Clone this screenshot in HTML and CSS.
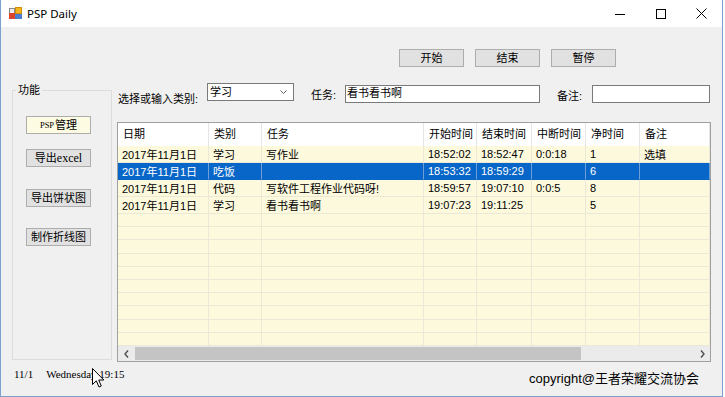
FILE: index.html
```html
<!DOCTYPE html>
<html lang="zh-CN">
<head>
<meta charset="utf-8">
<title>PSP Daily</title>
<link rel="stylesheet" href="styles.css">
</head>
<body>
<div class="window">
  <div class="titlebar">
    <svg class="app-icon" width="13" height="13" viewBox="0 0 13 13">
      <rect x="0.5" y="1.5" width="5" height="5" fill="#ececec" stroke="#8a8a8a"/>
      <rect x="6" y="0" width="7" height="7" fill="#f2b31c"/>
      <rect x="6.5" y="0.5" width="6" height="6" fill="none" stroke="#d08a0c"/>
      <rect x="0" y="6" width="6" height="6" fill="#d8452c"/>
      <rect x="6" y="7" width="7" height="5" fill="#4a7fd0"/>
    </svg>
    <span class="title">PSP Daily</span>
    <div class="caption">
      <span class="cap-btn"><svg width="10" height="10" viewBox="0 0 10 10"><path d="M0 5.5H10" stroke="#000" stroke-width="1"/></svg></span>
      <span class="cap-btn"><svg width="10" height="10" viewBox="0 0 10 10"><rect x="0.5" y="0.5" width="9" height="9" fill="none" stroke="#000"/></svg></span>
      <span class="cap-btn"><svg width="11" height="11" viewBox="0 0 11 11"><path d="M0.5 0.5L10.5 10.5M10.5 0.5L0.5 10.5" stroke="#000" stroke-width="1"/></svg></span>
    </div>
  </div>

  <div class="client">
    <div class="toolbar">
      <button class="btn">开始</button>
      <button class="btn">结束</button>
      <button class="btn">暂停</button>
    </div>

    <div class="main">
      <fieldset class="group">
        <legend class="legend">功能</legend>
        <button class="btn gbtn g1 active"><span class="en psp">PSP</span>管理</button>
        <button class="btn gbtn g2">导出<span class="en excel">excel</span></button>
        <button class="btn gbtn g3">导出饼状图</button>
        <button class="btn gbtn g4">制作折线图</button>
      </fieldset>

      <div class="content">
        <div class="form-row">
          <label class="lbl lbl-cat">选择或输入类别:</label>
          <div class="combo"><span class="combo-text">学习</span>
            <svg class="chev" width="7" height="4" viewBox="0 0 7 4"><path d="M0.5 0.5L3.5 3.5L6.5 0.5" fill="none" stroke="#606060"/></svg>
          </div>
          <label class="lbl lbl-task">任务:</label>
          <div class="textbox tb-task">看书看书啊</div>
          <label class="lbl lbl-note">备注:</label>
          <div class="textbox tb-note"></div>
        </div>

        <div class="datagrid">
          <div class="grow header">
            <div class="hc">日期</div><div class="hc">类别</div><div class="hc">任务</div><div class="hc">开始时间</div><div class="hc">结束时间</div><div class="hc">中断时间</div><div class="hc">净时间</div><div class="hc">备注</div>
          </div>
          <div class="rows">
            <div class="grow"><div class="c">2017年11月1日</div><div class="c">学习</div><div class="c">写作业</div><div class="c">18:52:02</div><div class="c">18:52:47</div><div class="c">0:0:18</div><div class="c">1</div><div class="c">选填</div></div>
            <div class="grow sel"><div class="c">2017年11月1日</div><div class="c">吃饭</div><div class="c"></div><div class="c">18:53:32</div><div class="c">18:59:29</div><div class="c"></div><div class="c">6</div><div class="c"></div></div>
            <div class="grow"><div class="c">2017年11月1日</div><div class="c">代码</div><div class="c">写软件工程作业代码呀!</div><div class="c">18:59:57</div><div class="c">19:07:10</div><div class="c">0:0:5</div><div class="c">8</div><div class="c"></div></div>
            <div class="grow"><div class="c">2017年11月1日</div><div class="c">学习</div><div class="c">看书看书啊</div><div class="c">19:07:23</div><div class="c">19:11:25</div><div class="c"></div><div class="c">5</div><div class="c"></div></div>
            <div class="grow"><div class="c"></div><div class="c"></div><div class="c"></div><div class="c"></div><div class="c"></div><div class="c"></div><div class="c"></div><div class="c"></div></div>
            <div class="grow"><div class="c"></div><div class="c"></div><div class="c"></div><div class="c"></div><div class="c"></div><div class="c"></div><div class="c"></div><div class="c"></div></div>
            <div class="grow"><div class="c"></div><div class="c"></div><div class="c"></div><div class="c"></div><div class="c"></div><div class="c"></div><div class="c"></div><div class="c"></div></div>
            <div class="grow"><div class="c"></div><div class="c"></div><div class="c"></div><div class="c"></div><div class="c"></div><div class="c"></div><div class="c"></div><div class="c"></div></div>
            <div class="grow"><div class="c"></div><div class="c"></div><div class="c"></div><div class="c"></div><div class="c"></div><div class="c"></div><div class="c"></div><div class="c"></div></div>
            <div class="grow"><div class="c"></div><div class="c"></div><div class="c"></div><div class="c"></div><div class="c"></div><div class="c"></div><div class="c"></div><div class="c"></div></div>
            <div class="grow"><div class="c"></div><div class="c"></div><div class="c"></div><div class="c"></div><div class="c"></div><div class="c"></div><div class="c"></div><div class="c"></div></div>
            <div class="grow"><div class="c"></div><div class="c"></div><div class="c"></div><div class="c"></div><div class="c"></div><div class="c"></div><div class="c"></div><div class="c"></div></div>
            <div class="grow"><div class="c"></div><div class="c"></div><div class="c"></div><div class="c"></div><div class="c"></div><div class="c"></div><div class="c"></div><div class="c"></div></div>
            <div class="grow"><div class="c"></div><div class="c"></div><div class="c"></div><div class="c"></div><div class="c"></div><div class="c"></div><div class="c"></div><div class="c"></div></div>
          </div>
          <div class="hscroll">
            <span class="sb-arrow"><svg width="5" height="8" viewBox="0 0 5 8"><path d="M4 0.5L1 4L4 7.5" fill="none" stroke="#505050" stroke-width="1.4"/></svg></span>
            <span class="sb-track"><span class="sb-thumb"></span></span>
            <span class="sb-arrow"><svg width="5" height="8" viewBox="0 0 5 8"><path d="M1 0.5L4 4L1 7.5" fill="none" stroke="#505050" stroke-width="1.4"/></svg></span>
          </div>
        </div>
      </div>
    </div>

    <div class="status">
      <span class="clock"><span class="date">11/1</span>Wednesday 19:15</span>
      <span class="copyright">copyright@王者荣耀交流协会</span>
    </div>
  </div>

  <svg class="cursor" width="13" height="21" viewBox="0 0 13 21">
    <path d="M0.5 0.5V16.5L4.3 12.8L7 19L9.3 18L6.7 12H11.8Z" fill="#fff" stroke="#000" stroke-width="1" stroke-linejoin="round"/>
  </svg>
</div>
</body>
</html>
```

FILE: styles.css
```css
* { box-sizing: border-box; }

html, body {
  margin: 0;
  padding: 0;
}

body {
  width: 725px;
  height: 397px;
  overflow: hidden;
  background: #ffffff;
  font-family: "Liberation Sans", "Noto Sans CJK SC", sans-serif;
  font-size: 11px;
  color: #000;
}

.window {
  position: relative;
  width: 723px;
  height: 397px;
  background: #f0f0f0;
  border: 1px solid #7c9fcc;
  border-top: none;
  display: flex;
  flex-direction: column;
}

/* title bar */
.titlebar {
  height: 27px;
  flex: none;
  background: #ffffff;
  display: flex;
  align-items: center;
}

.app-icon {
  margin-left: 8px;
  flex: none;
}

.title {
  margin-left: 5px;
  font-family: "Noto Sans", "Liberation Sans", sans-serif;
  font-size: 11.5px;
  color: #000;
}

.caption {
  margin-left: auto;
  display: flex;
  height: 27px;
}

.cap-btn {
  width: 41px;
  height: 27px;
  display: flex;
  align-items: center;
  justify-content: center;
}

/* client area */
.client {
  flex: 1;
  display: flex;
  flex-direction: column;
}

.toolbar {
  display: flex;
  gap: 11px;
  padding: 22px 0 0 398px;
}

.btn {
  width: 65px;
  height: 18px;
  margin: 0;
  padding: 0;
  background: #e1e1e1;
  border: 1px solid #adadad;
  font-family: "Liberation Sans", "Noto Sans CJK SC", sans-serif;
  font-size: 11px;
  line-height: 14px;
  color: #000;
  display: flex;
  align-items: center;
  justify-content: center;
}

.main {
  display: flex;
  margin-top: 17px;
}

/* group box */
.group {
  margin: 0 0 0 11px;
  width: 100px;
  height: 276px;
  border: 1px solid #dcdcdc;
  padding: 0 0 0 3px;
  display: flex;
  flex-direction: column;
  min-inline-size: 0;
}

.legend {
  padding: 0 2px;
  font-size: 11px;
  line-height: 12px;
  color: #000;
}

.gbtn {
  margin-left: 10px;
  font-family: "Liberation Serif", "Noto Sans CJK SC", serif;
}

.gbtn.g1 { margin-top: 20px; }
.gbtn.g2 { margin-top: 15px; }
.gbtn.g3 { margin-top: 22px; }
.gbtn.g4 { margin-top: 21px; }

.gbtn.active {
  background: #fdfbe2;
}

.en { font-family: "Liberation Serif", serif; }
.en.psp { font-size: 8.5px; margin-right: 1px; }
.en.excel { font-size: 12px; }

/* right content */
.content {
  margin-left: 5px;
  width: 594px;
  display: flex;
  flex-direction: column;
}

.form-row {
  display: flex;
  height: 18px;
  align-items: flex-start;
}

.lbl {
  font-size: 11px;
  line-height: 12px;
  white-space: nowrap;
  flex: none;
}

.lbl-cat {
  width: 90px;
  padding-left: 1px;
  padding-top: 9px;
}

.lbl-task {
  width: 34px;
  margin-left: 17px;
  padding-top: 5px;
}

.lbl-note {
  width: 35px;
  margin-left: 17px;
  padding-top: 6px;
}

.combo {
  width: 87px;
  height: 18px;
  margin-top: -1px;
  background: #fff;
  border: 1px solid #7a7a7a;
  display: flex;
  align-items: center;
  padding: 0 6px 0 2px;
  flex: none;
}

.combo-text {
  line-height: 14px;
  margin-top: -1px;
}

.chev {
  margin-left: auto;
}

.textbox {
  height: 18px;
  margin-top: 1px;
  background: #fff;
  border: 1px solid #7a7a7a;
  padding-left: 1px;
  line-height: 14px;
  flex: none;
}

.tb-task { width: 195px; }
.tb-note { width: 118px; }

/* data grid */
.datagrid {
  margin-top: 20px;
  width: 594px;
  height: 240px;
  border: 1px solid #a0a0a0;
  background: #fcf9dd;
  display: flex;
  flex-direction: column;
}

.grow {
  display: grid;
  grid-template-columns: 91px 53px 162px 53px 55px 54px 54px 70px;
}

.header {
  height: 23px;
  background: #ffffff;
  flex: none;
}

.hc {
  border-right: 1px solid #e5e5e5;
  padding-left: 5px;
  line-height: 23px;
  white-space: nowrap;
  font-size: 11px;
}

.rows {
  height: 200px;
  flex: none;
  display: flex;
  flex-direction: column;
}

.rows .grow {
  flex: 1;
}

.c {
  border-right: 1px solid #ebe8d6;
  border-bottom: 1px solid #ebe8d6;
  padding-left: 4px;
  white-space: nowrap;
  overflow: hidden;
  display: flex;
  align-items: center;
  font-size: 11px;
}

.sel .c {
  background: #0866c8;
  color: #fff;
  border-right-color: #6f9fd8;
  border-bottom-color: #0866c8;
}

.hscroll {
  height: 15px;
  flex: none;
  display: flex;
  background: #ebebeb;
}

.sb-arrow {
  width: 16px;
  display: flex;
  align-items: center;
  justify-content: center;
  flex: none;
}

.sb-track {
  flex: 1;
  padding: 1px 0;
}

.sb-thumb {
  display: block;
  width: 446px;
  height: 13px;
  margin-left: 1px;
  background: #c4c4c4;
}

/* status */
.status {
  flex: 1;
  display: flex;
  align-items: flex-start;
}

.clock {
  margin-left: 13px;
  margin-top: 6px;
  font-family: "Liberation Serif", serif;
  font-size: 11px;
  line-height: 13px;
  white-space: nowrap;
}

.clock .date {
  margin-right: 13px;
}

.copyright {
  margin-left: auto;
  margin-right: 23px;
  margin-top: 9px;
  font-size: 13px;
  line-height: 16px;
  white-space: nowrap;
}

.cursor {
  position: absolute;
  left: 91px;
  top: 368px;
}
```
